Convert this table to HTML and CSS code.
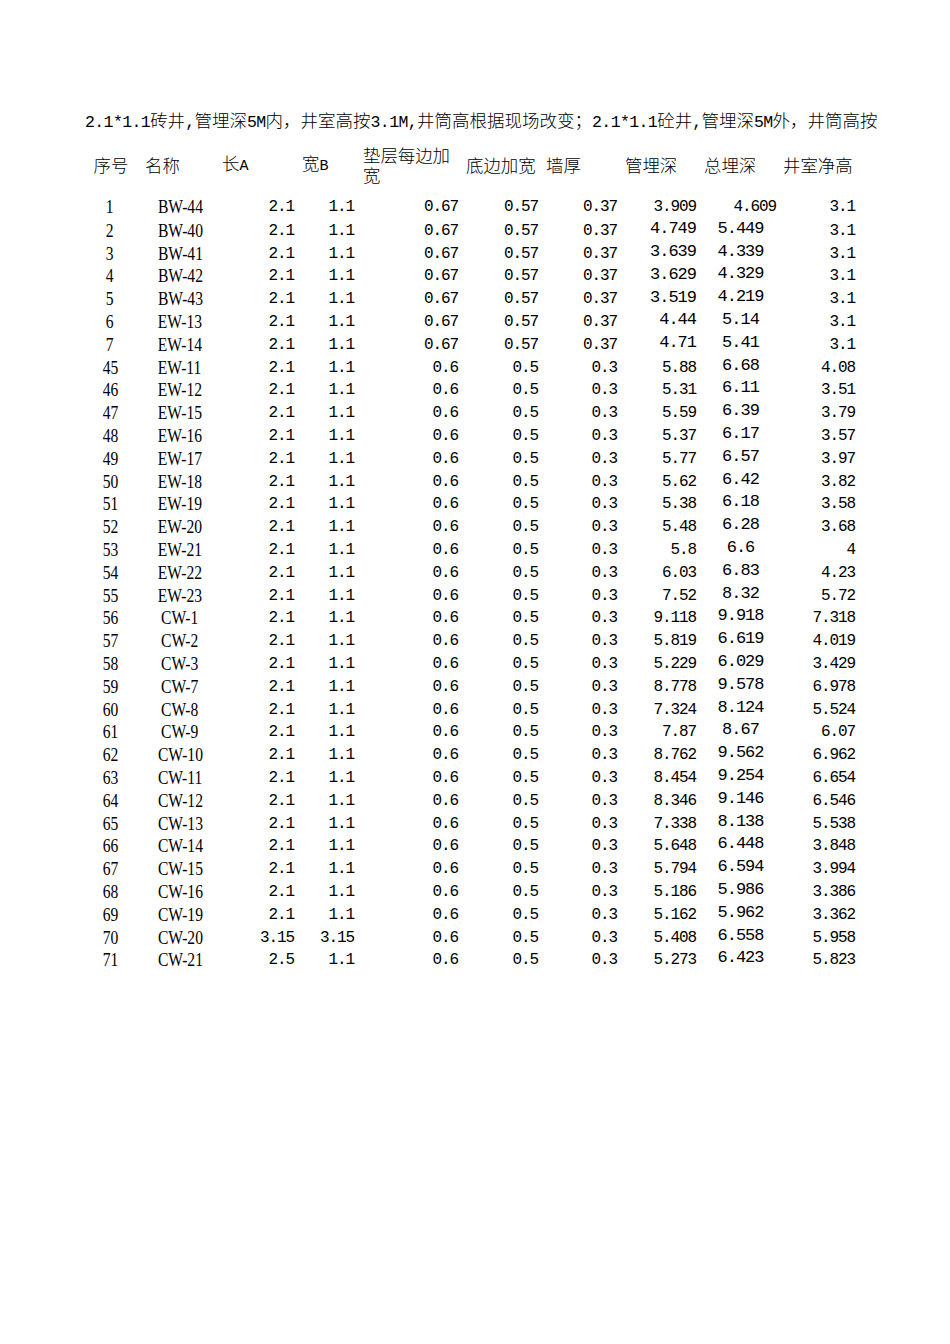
FILE: index.html
```html
<!DOCTYPE html>
<html lang="zh-CN">
<head>
<meta charset="utf-8">
<title>井室计算表</title>
<link rel="stylesheet" href="styles.css">
</head>
<body>
<div class="sheet">
  <div class="title"><span class="a">2.1*1.1</span>砖井<span class="a">,</span>管埋深<span class="a">5M</span>内，井室高按<span class="a">3.1M,</span>井筒高根据现场改变；<span class="a">2.1*1.1</span>砼井<span class="a">,</span>管埋深<span class="a">5M</span>外，井筒高按</div>

  <div class="row head">
    <div class="h h1">序号</div>
    <div class="h h2">名称</div>
    <div class="h h3">长<span class="a">A</span></div>
    <div class="h h4">宽<span class="a">B</span></div>
    <div class="h">垫层每边加宽</div>
    <div class="h">底边加宽</div>
    <div class="h">墙厚</div>
    <div class="h">管埋深</div>
    <div class="h">总埋深</div>
    <div class="h">井室净高</div>
  </div>

  <div class="rows">
    <div class="row"><div class="no"><span>1</span></div><div class="nm"><span>BW-44</span></div><div class="n n3">2.1</div><div class="n n4">1.1</div><div class="n">0.67</div><div class="n">0.57</div><div class="n">0.37</div><div class="n">3.909</div><div class="n n9r">4.609</div><div class="n">3.1</div></div>
    <div class="row"><div class="no"><span>2</span></div><div class="nm"><span>BW-40</span></div><div class="n n3">2.1</div><div class="n n4">1.1</div><div class="n">0.67</div><div class="n">0.57</div><div class="n">0.37</div><div class="n big">4.749</div><div class="n n9">5.449</div><div class="n">3.1</div></div>
    <div class="row"><div class="no"><span>3</span></div><div class="nm"><span>BW-41</span></div><div class="n n3">2.1</div><div class="n n4">1.1</div><div class="n">0.67</div><div class="n">0.57</div><div class="n">0.37</div><div class="n big">3.639</div><div class="n n9">4.339</div><div class="n">3.1</div></div>
    <div class="row"><div class="no"><span>4</span></div><div class="nm"><span>BW-42</span></div><div class="n n3">2.1</div><div class="n n4">1.1</div><div class="n">0.67</div><div class="n">0.57</div><div class="n">0.37</div><div class="n big">3.629</div><div class="n n9">4.329</div><div class="n">3.1</div></div>
    <div class="row"><div class="no"><span>5</span></div><div class="nm"><span>BW-43</span></div><div class="n n3">2.1</div><div class="n n4">1.1</div><div class="n">0.67</div><div class="n">0.57</div><div class="n">0.37</div><div class="n big">3.519</div><div class="n n9">4.219</div><div class="n">3.1</div></div>
    <div class="row"><div class="no"><span>6</span></div><div class="nm"><span>EW-13</span></div><div class="n n3">2.1</div><div class="n n4">1.1</div><div class="n">0.67</div><div class="n">0.57</div><div class="n">0.37</div><div class="n big">4.44</div><div class="n n9">5.14</div><div class="n">3.1</div></div>
    <div class="row"><div class="no"><span>7</span></div><div class="nm"><span>EW-14</span></div><div class="n n3">2.1</div><div class="n n4">1.1</div><div class="n">0.67</div><div class="n">0.57</div><div class="n">0.37</div><div class="n big">4.71</div><div class="n n9">5.41</div><div class="n">3.1</div></div>
    <div class="row"><div class="no"><span>45</span></div><div class="nm"><span>EW-11</span></div><div class="n n3">2.1</div><div class="n n4">1.1</div><div class="n">0.6</div><div class="n">0.5</div><div class="n">0.3</div><div class="n">5.88</div><div class="n n9">6.68</div><div class="n">4.08</div></div>
    <div class="row"><div class="no"><span>46</span></div><div class="nm"><span>EW-12</span></div><div class="n n3">2.1</div><div class="n n4">1.1</div><div class="n">0.6</div><div class="n">0.5</div><div class="n">0.3</div><div class="n">5.31</div><div class="n n9">6.11</div><div class="n">3.51</div></div>
    <div class="row"><div class="no"><span>47</span></div><div class="nm"><span>EW-15</span></div><div class="n n3">2.1</div><div class="n n4">1.1</div><div class="n">0.6</div><div class="n">0.5</div><div class="n">0.3</div><div class="n">5.59</div><div class="n n9">6.39</div><div class="n">3.79</div></div>
    <div class="row"><div class="no"><span>48</span></div><div class="nm"><span>EW-16</span></div><div class="n n3">2.1</div><div class="n n4">1.1</div><div class="n">0.6</div><div class="n">0.5</div><div class="n">0.3</div><div class="n">5.37</div><div class="n n9">6.17</div><div class="n">3.57</div></div>
    <div class="row"><div class="no"><span>49</span></div><div class="nm"><span>EW-17</span></div><div class="n n3">2.1</div><div class="n n4">1.1</div><div class="n">0.6</div><div class="n">0.5</div><div class="n">0.3</div><div class="n">5.77</div><div class="n n9">6.57</div><div class="n">3.97</div></div>
    <div class="row"><div class="no"><span>50</span></div><div class="nm"><span>EW-18</span></div><div class="n n3">2.1</div><div class="n n4">1.1</div><div class="n">0.6</div><div class="n">0.5</div><div class="n">0.3</div><div class="n">5.62</div><div class="n n9">6.42</div><div class="n">3.82</div></div>
    <div class="row"><div class="no"><span>51</span></div><div class="nm"><span>EW-19</span></div><div class="n n3">2.1</div><div class="n n4">1.1</div><div class="n">0.6</div><div class="n">0.5</div><div class="n">0.3</div><div class="n">5.38</div><div class="n n9">6.18</div><div class="n">3.58</div></div>
    <div class="row"><div class="no"><span>52</span></div><div class="nm"><span>EW-20</span></div><div class="n n3">2.1</div><div class="n n4">1.1</div><div class="n">0.6</div><div class="n">0.5</div><div class="n">0.3</div><div class="n">5.48</div><div class="n n9">6.28</div><div class="n">3.68</div></div>
    <div class="row"><div class="no"><span>53</span></div><div class="nm"><span>EW-21</span></div><div class="n n3">2.1</div><div class="n n4">1.1</div><div class="n">0.6</div><div class="n">0.5</div><div class="n">0.3</div><div class="n">5.8</div><div class="n n9">6.6</div><div class="n">4</div></div>
    <div class="row"><div class="no"><span>54</span></div><div class="nm"><span>EW-22</span></div><div class="n n3">2.1</div><div class="n n4">1.1</div><div class="n">0.6</div><div class="n">0.5</div><div class="n">0.3</div><div class="n">6.03</div><div class="n n9">6.83</div><div class="n">4.23</div></div>
    <div class="row"><div class="no"><span>55</span></div><div class="nm"><span>EW-23</span></div><div class="n n3">2.1</div><div class="n n4">1.1</div><div class="n">0.6</div><div class="n">0.5</div><div class="n">0.3</div><div class="n">7.52</div><div class="n n9">8.32</div><div class="n">5.72</div></div>
    <div class="row"><div class="no"><span>56</span></div><div class="nm"><span>CW-1</span></div><div class="n n3">2.1</div><div class="n n4">1.1</div><div class="n">0.6</div><div class="n">0.5</div><div class="n">0.3</div><div class="n">9.118</div><div class="n n9">9.918</div><div class="n">7.318</div></div>
    <div class="row"><div class="no"><span>57</span></div><div class="nm"><span>CW-2</span></div><div class="n n3">2.1</div><div class="n n4">1.1</div><div class="n">0.6</div><div class="n">0.5</div><div class="n">0.3</div><div class="n">5.819</div><div class="n n9">6.619</div><div class="n">4.019</div></div>
    <div class="row"><div class="no"><span>58</span></div><div class="nm"><span>CW-3</span></div><div class="n n3">2.1</div><div class="n n4">1.1</div><div class="n">0.6</div><div class="n">0.5</div><div class="n">0.3</div><div class="n">5.229</div><div class="n n9">6.029</div><div class="n">3.429</div></div>
    <div class="row"><div class="no"><span>59</span></div><div class="nm"><span>CW-7</span></div><div class="n n3">2.1</div><div class="n n4">1.1</div><div class="n">0.6</div><div class="n">0.5</div><div class="n">0.3</div><div class="n">8.778</div><div class="n n9">9.578</div><div class="n">6.978</div></div>
    <div class="row"><div class="no"><span>60</span></div><div class="nm"><span>CW-8</span></div><div class="n n3">2.1</div><div class="n n4">1.1</div><div class="n">0.6</div><div class="n">0.5</div><div class="n">0.3</div><div class="n">7.324</div><div class="n n9">8.124</div><div class="n">5.524</div></div>
    <div class="row"><div class="no"><span>61</span></div><div class="nm"><span>CW-9</span></div><div class="n n3">2.1</div><div class="n n4">1.1</div><div class="n">0.6</div><div class="n">0.5</div><div class="n">0.3</div><div class="n">7.87</div><div class="n n9">8.67</div><div class="n">6.07</div></div>
    <div class="row"><div class="no"><span>62</span></div><div class="nm"><span>CW-10</span></div><div class="n n3">2.1</div><div class="n n4">1.1</div><div class="n">0.6</div><div class="n">0.5</div><div class="n">0.3</div><div class="n">8.762</div><div class="n n9">9.562</div><div class="n">6.962</div></div>
    <div class="row"><div class="no"><span>63</span></div><div class="nm"><span>CW-11</span></div><div class="n n3">2.1</div><div class="n n4">1.1</div><div class="n">0.6</div><div class="n">0.5</div><div class="n">0.3</div><div class="n">8.454</div><div class="n n9">9.254</div><div class="n">6.654</div></div>
    <div class="row"><div class="no"><span>64</span></div><div class="nm"><span>CW-12</span></div><div class="n n3">2.1</div><div class="n n4">1.1</div><div class="n">0.6</div><div class="n">0.5</div><div class="n">0.3</div><div class="n">8.346</div><div class="n n9">9.146</div><div class="n">6.546</div></div>
    <div class="row"><div class="no"><span>65</span></div><div class="nm"><span>CW-13</span></div><div class="n n3">2.1</div><div class="n n4">1.1</div><div class="n">0.6</div><div class="n">0.5</div><div class="n">0.3</div><div class="n">7.338</div><div class="n n9">8.138</div><div class="n">5.538</div></div>
    <div class="row"><div class="no"><span>66</span></div><div class="nm"><span>CW-14</span></div><div class="n n3">2.1</div><div class="n n4">1.1</div><div class="n">0.6</div><div class="n">0.5</div><div class="n">0.3</div><div class="n">5.648</div><div class="n n9">6.448</div><div class="n">3.848</div></div>
    <div class="row"><div class="no"><span>67</span></div><div class="nm"><span>CW-15</span></div><div class="n n3">2.1</div><div class="n n4">1.1</div><div class="n">0.6</div><div class="n">0.5</div><div class="n">0.3</div><div class="n">5.794</div><div class="n n9">6.594</div><div class="n">3.994</div></div>
    <div class="row"><div class="no"><span>68</span></div><div class="nm"><span>CW-16</span></div><div class="n n3">2.1</div><div class="n n4">1.1</div><div class="n">0.6</div><div class="n">0.5</div><div class="n">0.3</div><div class="n">5.186</div><div class="n n9">5.986</div><div class="n">3.386</div></div>
    <div class="row"><div class="no"><span>69</span></div><div class="nm"><span>CW-19</span></div><div class="n n3">2.1</div><div class="n n4">1.1</div><div class="n">0.6</div><div class="n">0.5</div><div class="n">0.3</div><div class="n">5.162</div><div class="n n9">5.962</div><div class="n">3.362</div></div>
    <div class="row"><div class="no"><span>70</span></div><div class="nm"><span>CW-20</span></div><div class="n n3">3.15</div><div class="n n4">3.15</div><div class="n">0.6</div><div class="n">0.5</div><div class="n">0.3</div><div class="n">5.408</div><div class="n n9">6.558</div><div class="n">5.958</div></div>
    <div class="row"><div class="no"><span>71</span></div><div class="nm"><span>CW-21</span></div><div class="n n3">2.5</div><div class="n n4">1.1</div><div class="n">0.6</div><div class="n">0.5</div><div class="n">0.3</div><div class="n">5.273</div><div class="n n9">6.423</div><div class="n">5.823</div></div>
  </div>
</div>
</body>
</html>
```

FILE: styles.css
```css
html, body {
  margin: 0;
  padding: 0;
  background: #ffffff;
}

body {
  color: #000000;
  font-family: "Noto Sans CJK SC", "Noto Sans CJK JP", sans-serif;
  font-weight: 300;
}

.sheet {
  padding: 108px 0 0 85px;
}

.a {
  font-family: "Liberation Mono", monospace;
  font-weight: 400;
}

.title {
  font-size: 17.5px;
  line-height: 24px;
  height: 24px;
  white-space: nowrap;
}

.title .a {
  font-size: 16.5px;
  letter-spacing: -0.6px;
}

.row {
  display: grid;
  grid-template-columns: 52px 84px 77px 62px 103px 80px 79px 79px 79px 80px;
  align-items: center;
}

.head {
  margin-top: 13px;
  height: 40px;
  font-size: 17.4px;
  line-height: 20px;
}

.head .a {
  font-size: 15px;
}

.h {
  padding-left: 3px;
}

.h1 {
  padding-left: 0;
  text-align: center;
}

.h2 {
  padding-left: 8px;
}

.h3 {
  padding-left: 1px;
}

.h4 {
  padding-left: 4px;
}

.rows {
  margin-top: 11px;
}

.rows .row {
  height: 22.8px;
}

.no, .nm {
  text-align: center;
  font-family: "Liberation Serif", serif;
  font-weight: 400;
  font-size: 19px;
  line-height: 22px;
}

.no span, .nm span {
  display: inline-block;
  transform: scaleX(0.82);
}

.no {
  padding-right: 2px;
}

.nm {
  padding-left: 2px;
}

.n {
  text-align: right;
  padding-right: 5px;
  font-family: "Liberation Mono", monospace;
  font-weight: 400;
  font-size: 16px;
  letter-spacing: -1.1px;
  line-height: 20px;
}

.n3 {
  padding-right: 4px;
}

.n4 {
  padding-right: 6px;
}

.big {
  font-size: 17px;
  letter-spacing: -1px;
  padding-bottom: 3px;
}

.n9 {
  text-align: center;
  padding-right: 0;
  font-size: 17px;
  letter-spacing: -1px;
  padding-bottom: 4px;
}

.n9r {
  padding-right: 4px;
}
```
